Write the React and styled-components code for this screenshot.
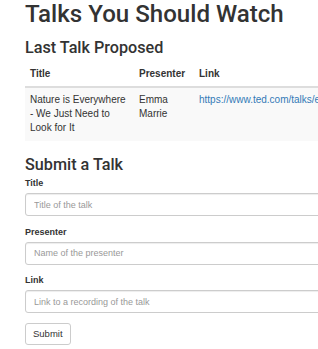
import React from "react";
import styled, { createGlobalStyle } from "styled-components";

const Global = createGlobalStyle`
  html, body {
    margin: 0;
    padding: 0;
    overflow: hidden;
    background: #fff;
  }
  body {
    font-family: "Liberation Sans", Arial, sans-serif;
    font-size: 10px;
    line-height: 14px;
    color: #333;
  }
  * { box-sizing: border-box; }
`;

const Page = styled.div`
  width: 620px;
  padding: 0 0 0 25px;
`;

const Title = styled.h1`
  font-family: Roboto, "Liberation Sans", sans-serif;
  font-weight: 500;
  font-size: 24.1px;
  line-height: 29px;
  margin: 0;
  color: #333;
`;

const Heading = styled.h3`
  font-family: Roboto, "Liberation Sans", sans-serif;
  font-weight: 500;
  font-size: 16.2px;
  line-height: 19px;
  margin: ${(p) => p.$mt}px 0 ${(p) => p.$mb}px;
  color: #333;
`;

const Table = styled.table`
  width: 100%;
  border-collapse: collapse;
  border-spacing: 0;
  table-layout: fixed;
`;

const Th = styled.th`
  text-align: left;
  font-weight: bold;
  padding: 5px 5px 5px;
  border-bottom: 2px solid #ddd;
  vertical-align: bottom;
`;

const Row = styled.tr`
  background: ${(p) => (p.$striped ? "#f9f9f9" : "transparent")};
`;

const Td = styled.td`
  padding: 5px 5px 6px;
  vertical-align: top;
  white-space: ${(p) => (p.$nowrap ? "nowrap" : "normal")};
`;

const Link = styled.a`
  color: #337ab7;
  text-decoration: none;
`;

const Form = styled.form`
  display: flex;
  flex-direction: column;
`;

const Group = styled.div`
  display: flex;
  flex-direction: column;
  margin-bottom: 9.5px;
`;

const Label = styled.label`
  font-weight: bold;
  font-size: 9px;
  line-height: 13px;
  margin-bottom: 3px;
`;

const Input = styled.input`
  height: 23px;
  width: 100%;
  padding: 0 8px;
  border: 1px solid #ccc;
  border-radius: 3px;
  box-shadow: inset 0 1px 1px rgba(0, 0, 0, 0.075);
  font-family: "Liberation Sans", Arial, sans-serif;
  font-size: 9px;
  color: #555;
  background: #fff;
  outline: none;
  &::placeholder {
    color: #999;
  }
`;

const Button = styled.button`
  align-self: flex-start;
  height: 22px;
  padding: 0 7px;
  border: 1px solid #ccc;
  border-radius: 3px;
  background: #fff;
  color: #333;
  font-family: "Liberation Sans", Arial, sans-serif;
  font-size: 9.5px;
  line-height: 20px;
  cursor: pointer;
`;

export default function App() {
  return (
    <>
      <Global />
      <Page>
        <Title>Talks You Should Watch</Title>
        <Heading $mt={9.3} $mb={5.2}>Last Talk Proposed</Heading>
        <Table>
          <colgroup>
            <col style={{ width: 109 }} />
            <col style={{ width: 60 }} />
            <col />
          </colgroup>
          <thead>
            <tr>
              <Th>Title</Th>
              <Th>Presenter</Th>
              <Th>Link</Th>
            </tr>
          </thead>
          <tbody>
            <Row $striped>
              <Td>Nature is Everywhere - We Just Need to Look for It</Td>
              <Td>Emma Marrie</Td>
              <Td $nowrap>
                <Link href="#">
                  https://www.ted.com/talks/emma_marris_nature_is_everywhere_we_just_need_to_learn_to_see_it
                </Link>
              </Td>
            </Row>
          </tbody>
        </Table>
        <Heading $mt={13.3} $mb={3.7}>Submit a Talk</Heading>
        <Form onSubmit={(e) => e.preventDefault()}>
          <Group>
            <Label>Title</Label>
            <Input placeholder="Title of the talk" />
          </Group>
          <Group>
            <Label>Presenter</Label>
            <Input placeholder="Name of the presenter" />
          </Group>
          <Group>
            <Label>Link</Label>
            <Input placeholder="Link to a recording of the talk" />
          </Group>
          <Button type="submit">Submit</Button>
        </Form>
      </Page>
    </>
  );
}
